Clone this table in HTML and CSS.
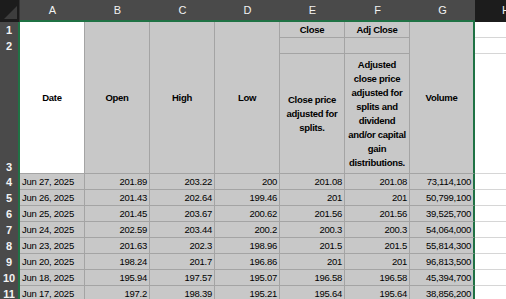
FILE: index.html
```html
<!DOCTYPE html>
<html>
<head>
<meta charset="utf-8">
<link rel="stylesheet" href="styles.css">
</head>
<body>
<div class="sheet">
  <div class="corner"><span class="tri"></span></div>
  <div class="ch">A</div><div class="ch">B</div><div class="ch">C</div><div class="ch">D</div><div class="ch">E</div><div class="ch">F</div><div class="ch">G</div>
  <div class="ch off">H</div>

  <div class="rh r1">1</div>
  <div class="rh r2">2</div>
  <div class="rh r3 bottom">3</div>

  <div class="c hd active m3 ca">Date</div>
  <div class="c hd m3 cb">Open</div>
  <div class="c hd m3 cc">High</div>
  <div class="c hd m3 cd">Low</div>
  <div class="c hd ce r1">Close</div>
  <div class="c hd cf r1">Adj Close</div>
  <div class="c hd m3 cg last">Volume</div>
  <div class="c out ch8 r1"></div>
  <div class="c hd ce r2"></div>
  <div class="c hd cf r2"></div>
  <div class="c out ch8 r2"></div>
  <div class="c hd ce r3 wrap">Close price<br>adjusted for<br>splits.</div>
  <div class="c hd cf r3 wrap">Adjusted<br>close price<br>adjusted for<br>splits and<br>dividend<br>and/or capital<br>gain<br>distributions.</div>
  <div class="c out ch8 r3"></div>

  <div class="rh">4</div><div class="c dt">Jun 27, 2025</div><div class="c n">201.89</div><div class="c n">203.22</div><div class="c n">200</div><div class="c n">201.08</div><div class="c n">201.08</div><div class="c n last">73,114,100</div><div class="c out"></div>
  <div class="rh">5</div><div class="c dt">Jun 26, 2025</div><div class="c n">201.43</div><div class="c n">202.64</div><div class="c n">199.46</div><div class="c n">201</div><div class="c n">201</div><div class="c n last">50,799,100</div><div class="c out"></div>
  <div class="rh">6</div><div class="c dt">Jun 25, 2025</div><div class="c n">201.45</div><div class="c n">203.67</div><div class="c n">200.62</div><div class="c n">201.56</div><div class="c n">201.56</div><div class="c n last">39,525,700</div><div class="c out"></div>
  <div class="rh">7</div><div class="c dt">Jun 24, 2025</div><div class="c n">202.59</div><div class="c n">203.44</div><div class="c n">200.2</div><div class="c n">200.3</div><div class="c n">200.3</div><div class="c n last">54,064,000</div><div class="c out"></div>
  <div class="rh">8</div><div class="c dt">Jun 23, 2025</div><div class="c n">201.63</div><div class="c n">202.3</div><div class="c n">198.96</div><div class="c n">201.5</div><div class="c n">201.5</div><div class="c n last">55,814,300</div><div class="c out"></div>
  <div class="rh">9</div><div class="c dt">Jun 20, 2025</div><div class="c n">198.24</div><div class="c n">201.7</div><div class="c n">196.86</div><div class="c n">201</div><div class="c n">201</div><div class="c n last">96,813,500</div><div class="c out"></div>
  <div class="rh">10</div><div class="c dt">Jun 18, 2025</div><div class="c n">195.94</div><div class="c n">197.57</div><div class="c n">195.07</div><div class="c n">196.58</div><div class="c n">196.58</div><div class="c n last">45,394,700</div><div class="c out"></div>
  <div class="rh">11</div><div class="c dt">Jun 17, 2025</div><div class="c n">197.2</div><div class="c n">198.39</div><div class="c n">195.21</div><div class="c n">195.64</div><div class="c n">195.64</div><div class="c n last">38,856,200</div><div class="c out"></div>
</div>
</body>
</html>
```

FILE: styles.css
```css
html, body {
  margin: 0;
  padding: 0;
  background: #ffffff;
  overflow: hidden;
}
.sheet {
  display: grid;
  grid-template-columns: 20px repeat(7, 65px) 31px;
  grid-template-rows: 22px 16px 16px 120px repeat(8, 16px);
  width: 506px;
  height: 299px;
  overflow: hidden;
  font-family: "Liberation Sans", Arial, sans-serif;
}
.corner {
  background: #1c1c1c;
  border-right: 1px solid #333;
  position: relative;
}
.tri {
  position: absolute;
  right: 2px;
  bottom: 3px;
  width: 13px;
  height: 13px;
  background: #3d3d3d;
  clip-path: polygon(100% 0, 100% 100%, 0 100%);
}
.ch {
  background: #4a4a4a;
  border-bottom: 2px solid #1f7244;
  color: #f2f2f2;
  font-size: 11px;
  display: flex;
  align-items: center;
  justify-content: center;
}
.ch.off {
  background: #1c1c1c;
  border-bottom: 2px solid #1c1c1c;
  justify-content: flex-start;
  padding-left: 27px;
  overflow: hidden;
}
.rh {
  background: #4a4a4a;
  border-right: 2px solid #1f7244;
  color: #f2f2f2;
  font-weight: bold;
  font-size: 11px;
  display: flex;
  align-items: center;
  justify-content: center;
  grid-column: 1;
}
.rh.bottom {
  align-items: flex-end;
  padding-bottom: 1px;
}
.rh.r1 { grid-row: 2; }
.rh.r2 { grid-row: 3; }
.rh.r3 { grid-row: 4; }

.c {
  background: #c8c8c8;
  border-right: 1px solid #a4a4a4;
  border-bottom: 1px solid #a4a4a4;
  color: #000;
  font-size: 9.5px;
  letter-spacing: -0.25px;
  display: flex;
  align-items: center;
  white-space: nowrap;
  overflow: hidden;
}
.c.hd {
  font-weight: bold;
  letter-spacing: -0.3px;
  justify-content: center;
  text-align: center;
}
.c.wrap {
  line-height: 14px;
  padding: 0;
}
.c.active {
  background: #ffffff;
}
.c.m3 { grid-row: 2 / span 3; }
.c.ca { grid-column: 2; }
.c.cb { grid-column: 3; }
.c.cc { grid-column: 4; }
.c.cd { grid-column: 5; }
.c.ce { grid-column: 6; }
.c.cf { grid-column: 7; }
.c.cg { grid-column: 8; }
.c.ch8 { grid-column: 9; }
.c.r1 { grid-row: 2; }
.c.r2 { grid-row: 3; }
.c.r3 { grid-row: 4; }
.c.last {
  border-right: 2px solid #1f7244;
}
.c.dt {
  padding-left: 2px;
}
.c.n {
  justify-content: flex-end;
  padding-right: 2px;
}
.c.out {
  background: #ffffff;
  border-right: none;
  border-bottom: 1px solid #d6d6d6;
}
```
